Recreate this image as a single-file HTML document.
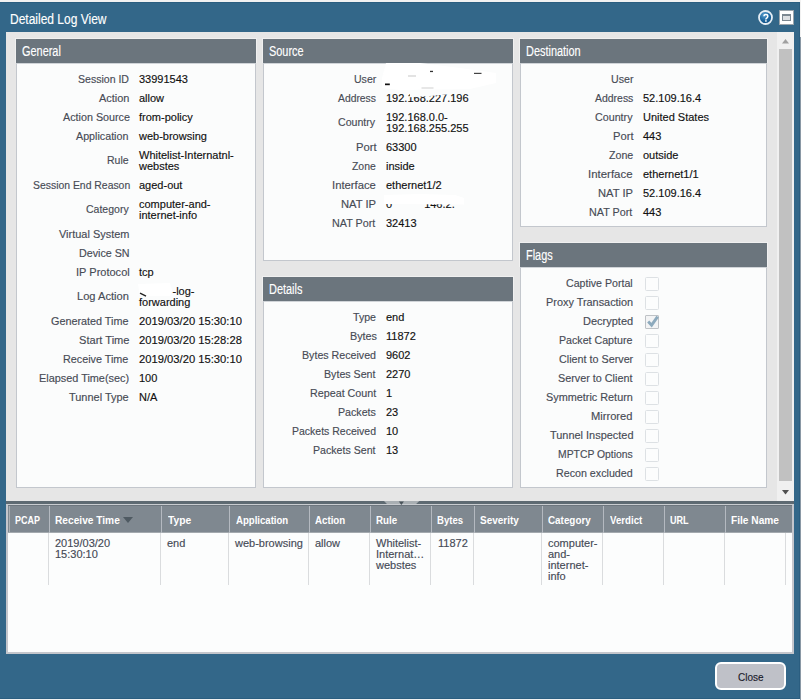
<!DOCTYPE html>
<html><head><meta charset="utf-8"><style>
html,body{margin:0;padding:0;width:801px;height:700px;overflow:hidden;background:#f1f1f1}
.t{position:absolute;white-space:nowrap;font-family:"Liberation Sans",sans-serif;-webkit-text-stroke:0.15px currentColor}
</style></head><body>
<div style="position:absolute;left:0px;top:0px;width:801px;height:700px;background:#f1f1f1"></div>
<div style="position:absolute;left:800px;top:37px;width:1px;height:663px;background:#8a98a5"></div>
<div style="position:absolute;left:0px;top:2px;width:800px;height:697px;background:#336789;box-sizing:border-box;border:1px solid #2b5e80;border-left:none"></div>
<div class="t" style="top:10px;font-size:15.5px;line-height:18px;color:#ffffff;left:10px;transform:scaleX(0.774);transform-origin:left top;-webkit-text-stroke:0.15px #fff;">Detailed Log View</div>
<svg style="position:absolute;left:758px;top:10px" width="16" height="16" viewBox="0 0 16 16"><defs><radialGradient id="hg" cx="0.4" cy="0.3" r="0.8"><stop offset="0" stop-color="#5a9fd0"/><stop offset="0.5" stop-color="#1f68a0"/><stop offset="1" stop-color="#0a4a7c"/></radialGradient></defs><circle cx="7.5" cy="7.5" r="6.5" fill="url(#hg)" stroke="#e6eef5" stroke-width="1.8"/><path d="M6,6.3 Q6,4.6 7.9,4.6 Q9.8,4.6 9.8,6.3 Q9.8,7.4 8.8,8 Q7.9,8.5 7.9,9.5" fill="none" stroke="#fff" stroke-width="1.5"/><rect x="7.1" y="10.2" width="1.6" height="1.5" fill="#fff"/></svg>
<div style="position:absolute;left:779px;top:10px;width:15px;height:15px;background:#fff;box-sizing:border-box;border:1px solid #9aa4ab"></div>
<div style="position:absolute;left:782px;top:14px;width:9px;height:7px;background:#dde0e3;box-sizing:border-box;border:2px solid #7c8891;border-width:2px 1px 1px 1px"></div>
<div style="position:absolute;left:6px;top:32px;width:788px;height:469px;background:#e6e6e6"></div>
<div style="position:absolute;left:777px;top:32px;width:17px;height:469px;background:#f0f0f0"></div>
<div style="position:absolute;left:779px;top:49px;width:13px;height:432px;background:#c1c1c1"></div>
<svg style="position:absolute;left:782px;top:39px" width="8" height="5"><polygon points="0,4.5 3.5,0 7,4.5" fill="#a0a0a0"/></svg>
<svg style="position:absolute;left:782px;top:490px" width="8" height="5"><polygon points="0,0 7,0 3.5,4.5" fill="#505050"/></svg>
<div style="position:absolute;left:15px;top:38px;width:242px;height:25px;background:#f0f0f0"></div>
<div style="position:absolute;left:16px;top:39px;width:240px;height:24px;background:#6b757d"></div>
<div style="position:absolute;left:16px;top:63px;width:240px;height:425px;background:#fbfcfc;box-sizing:border-box;border:1px solid #c3c7cd;border-top:1px solid #d0d4d8"></div>
<div class="t" style="top:43px;font-size:14px;line-height:16px;color:#ffffff;left:22px;transform:scaleX(0.78);transform-origin:left top;">General</div>
<div style="position:absolute;left:262px;top:38px;width:252px;height:25px;background:#f0f0f0"></div>
<div style="position:absolute;left:263px;top:39px;width:250px;height:24px;background:#6b757d"></div>
<div style="position:absolute;left:263px;top:63px;width:250px;height:198px;background:#fbfcfc;box-sizing:border-box;border:1px solid #c3c7cd;border-top:1px solid #d0d4d8"></div>
<div class="t" style="top:43px;font-size:14px;line-height:16px;color:#ffffff;left:269px;transform:scaleX(0.78);transform-origin:left top;">Source</div>
<div style="position:absolute;left:262px;top:276px;width:252px;height:25px;background:#f0f0f0"></div>
<div style="position:absolute;left:263px;top:277px;width:250px;height:24px;background:#6b757d"></div>
<div style="position:absolute;left:263px;top:301px;width:250px;height:187px;background:#fbfcfc;box-sizing:border-box;border:1px solid #c3c7cd;border-top:1px solid #d0d4d8"></div>
<div class="t" style="top:281px;font-size:14px;line-height:16px;color:#ffffff;left:269px;transform:scaleX(0.78);transform-origin:left top;">Details</div>
<div style="position:absolute;left:519px;top:38px;width:249px;height:25px;background:#f0f0f0"></div>
<div style="position:absolute;left:520px;top:39px;width:247px;height:24px;background:#6b757d"></div>
<div style="position:absolute;left:520px;top:63px;width:247px;height:164px;background:#fbfcfc;box-sizing:border-box;border:1px solid #c3c7cd;border-top:1px solid #d0d4d8"></div>
<div class="t" style="top:43px;font-size:14px;line-height:16px;color:#ffffff;left:526px;transform:scaleX(0.78);transform-origin:left top;">Destination</div>
<div style="position:absolute;left:519px;top:242px;width:249px;height:25px;background:#f0f0f0"></div>
<div style="position:absolute;left:520px;top:243px;width:247px;height:24px;background:#6b757d"></div>
<div style="position:absolute;left:520px;top:267px;width:247px;height:221px;background:#fbfcfc;box-sizing:border-box;border:1px solid #c3c7cd;border-top:1px solid #d0d4d8"></div>
<div class="t" style="top:247px;font-size:14px;line-height:16px;color:#ffffff;left:526px;transform:scaleX(0.78);transform-origin:left top;">Flags</div>
<div class="t" style="top:73px;font-size:11px;line-height:13px;color:#111111;left:139px;">33991543</div>
<div class="t" style="top:92px;font-size:11px;line-height:13px;color:#111111;left:139px;">allow</div>
<div class="t" style="top:111px;font-size:11px;line-height:13px;color:#111111;left:139px;">from-policy</div>
<div class="t" style="top:130px;font-size:11px;line-height:13px;color:#111111;left:139px;">web-browsing</div>
<div class="t" style="top:149px;font-size:11px;line-height:13px;color:#111111;left:139px;">Whitelist-Internatnl-</div>
<div class="t" style="top:160px;font-size:11px;line-height:13px;color:#111111;left:139px;">webstes</div>
<div class="t" style="top:179px;font-size:11px;line-height:13px;color:#111111;left:139px;">aged-out</div>
<div class="t" style="top:198px;font-size:11px;line-height:13px;color:#111111;left:139px;">computer-and-</div>
<div class="t" style="top:209px;font-size:11px;line-height:13px;color:#111111;left:139px;">internet-info</div>
<div class="t" style="top:266px;font-size:11px;line-height:13px;color:#111111;left:139px;">tcp</div>
<div class="t" style="top:285px;font-size:11px;line-height:13px;color:#111111;left:139px;"><span style="display:inline-block;width:33.5px"></span>-log-</div>
<div class="t" style="top:296px;font-size:11px;line-height:13px;color:#111111;left:139px;">forwarding</div>
<div class="t" style="top:372px;font-size:11px;line-height:13px;color:#111111;left:139px;">100</div>
<div class="t" style="top:391px;font-size:11px;line-height:13px;color:#111111;left:139px;">N/A</div>
<div class="t" style="top:92px;font-size:11px;line-height:13px;color:#111111;left:386px;">192.168.227.196</div>
<div class="t" style="top:111px;font-size:11px;line-height:13px;color:#111111;left:386px;">192.168.0.0-</div>
<div class="t" style="top:122px;font-size:11px;line-height:13px;color:#111111;left:386px;">192.168.255.255</div>
<div class="t" style="top:141px;font-size:11px;line-height:13px;color:#111111;left:386px;">63300</div>
<div class="t" style="top:160px;font-size:11px;line-height:13px;color:#111111;left:386px;">inside</div>
<div class="t" style="top:179px;font-size:11px;line-height:13px;color:#111111;left:386px;">ethernet1/2</div>
<div class="t" style="top:198px;font-size:11px;line-height:13px;color:#111111;left:386px;">0<span style="display:inline-block;width:32px"></span>146.2.</div>
<div class="t" style="top:217px;font-size:11px;line-height:13px;color:#111111;left:386px;">32413</div>
<div class="t" style="top:311px;font-size:11px;line-height:13px;color:#111111;left:386px;">end</div>
<div class="t" style="top:330px;font-size:11px;line-height:13px;color:#111111;left:386px;">11872</div>
<div class="t" style="top:349px;font-size:11px;line-height:13px;color:#111111;left:386px;">9602</div>
<div class="t" style="top:368px;font-size:11px;line-height:13px;color:#111111;left:386px;">2270</div>
<div class="t" style="top:387px;font-size:11px;line-height:13px;color:#111111;left:386px;">1</div>
<div class="t" style="top:406px;font-size:11px;line-height:13px;color:#111111;left:386px;">23</div>
<div class="t" style="top:425px;font-size:11px;line-height:13px;color:#111111;left:386px;">10</div>
<div class="t" style="top:444px;font-size:11px;line-height:13px;color:#111111;left:386px;">13</div>
<div class="t" style="top:92px;font-size:11px;line-height:13px;color:#111111;left:643px;">52.109.16.4</div>
<div class="t" style="top:111px;font-size:11px;line-height:13px;color:#111111;left:643px;">United States</div>
<div class="t" style="top:130px;font-size:11px;line-height:13px;color:#111111;left:643px;">443</div>
<div class="t" style="top:149px;font-size:11px;line-height:13px;color:#111111;left:643px;">outside</div>
<div class="t" style="top:168px;font-size:11px;line-height:13px;color:#111111;left:643px;">ethernet1/1</div>
<div class="t" style="top:187px;font-size:11px;line-height:13px;color:#111111;left:643px;">52.109.16.4</div>
<div class="t" style="top:206px;font-size:11px;line-height:13px;color:#111111;left:643px;">443</div>
<div style="position:absolute;left:645px;top:277px;width:14px;height:14px;background:#fcfdfd;box-sizing:border-box;border:1px solid #dde1e4;border-radius:1.5px"></div>
<div style="position:absolute;left:645px;top:296px;width:14px;height:14px;background:#fcfdfd;box-sizing:border-box;border:1px solid #dde1e4;border-radius:1.5px"></div>
<div style="position:absolute;left:645px;top:315px;width:14px;height:14px;background:#f3f4f5;box-sizing:border-box;border:1px solid #bec2c6;border-radius:1px"></div>
<svg style="position:absolute;left:645px;top:315px" width="14" height="14"><polyline points="3.2,6.6 6.6,10.2 12.6,1.6" fill="none" stroke="#8daabd" stroke-width="2.9"/></svg>
<div style="position:absolute;left:645px;top:334px;width:14px;height:14px;background:#fcfdfd;box-sizing:border-box;border:1px solid #dde1e4;border-radius:1.5px"></div>
<div style="position:absolute;left:645px;top:353px;width:14px;height:14px;background:#fcfdfd;box-sizing:border-box;border:1px solid #dde1e4;border-radius:1.5px"></div>
<div style="position:absolute;left:645px;top:372px;width:14px;height:14px;background:#fcfdfd;box-sizing:border-box;border:1px solid #dde1e4;border-radius:1.5px"></div>
<div style="position:absolute;left:645px;top:391px;width:14px;height:14px;background:#fcfdfd;box-sizing:border-box;border:1px solid #dde1e4;border-radius:1.5px"></div>
<div style="position:absolute;left:645px;top:410px;width:14px;height:14px;background:#fcfdfd;box-sizing:border-box;border:1px solid #dde1e4;border-radius:1.5px"></div>
<div style="position:absolute;left:645px;top:429px;width:14px;height:14px;background:#fcfdfd;box-sizing:border-box;border:1px solid #dde1e4;border-radius:1.5px"></div>
<div style="position:absolute;left:645px;top:448px;width:14px;height:14px;background:#fcfdfd;box-sizing:border-box;border:1px solid #dde1e4;border-radius:1.5px"></div>
<div style="position:absolute;left:645px;top:467px;width:14px;height:14px;background:#fcfdfd;box-sizing:border-box;border:1px solid #dde1e4;border-radius:1.5px"></div>
<svg style="position:absolute;left:376px;top:63px" width="130" height="40"><polygon points="10,0 44,0 84,5 120,10 120,20 94,26 24,27 6,25 6,15" fill="#ffffff"/><polygon points="34,27 71,27 71,31.5 54,33 34,34.3" fill="#fbfcfc"/><rect x="9" y="20.5" width="4.8" height="1.7" fill="#111"/><rect x="32" y="12.5" width="8" height="1" fill="#c8c8c8"/><rect x="54" y="7.8" width="3" height="1.3" fill="#333"/><rect x="98" y="9.8" width="7.5" height="1.2" fill="#444"/><rect x="45.5" y="24.5" width="12" height="1" fill="#d0d0d0"/></svg>
<svg style="position:absolute;left:380px;top:192px" width="90" height="24"><polygon points="4,3 40,2 75,3 84,6 84,12.6 4,11.9" fill="#ffffff"/></svg>
<svg style="position:absolute;left:136px;top:282px" width="40" height="20"><polygon points="2,2 34,1 36,8 34,14 4,14" fill="#ffffff"/><line x1="4" y1="11.2" x2="10" y2="14.2" stroke="#222" stroke-width="1.3"/></svg>
<div style="position:absolute;left:6px;top:501px;width:788px;height:3px;background:#5e6a72"></div>
<div style="position:absolute;left:6px;top:504px;width:788px;height:1px;background:#c9ccd0"></div>
<div style="position:absolute;left:6px;top:505px;width:788px;height:149px;background:#c4c6cc"></div>
<div style="position:absolute;left:8px;top:505px;width:784px;height:27px;background:#7f8890;border-top:1px solid #6d767e;box-sizing:border-box"></div>
<div style="position:absolute;left:8px;top:532px;width:784px;height:120px;background:#fcfdfd"></div>
<div style="position:absolute;left:8px;top:532px;width:784px;height:1px;background:#a3a9ae"></div>
<div style="position:absolute;left:9px;top:506px;width:1px;height:26px;background:#a9afb4"></div>
<div style="position:absolute;left:49px;top:506px;width:1px;height:27px;background:#b4b9c0"></div>
<div style="position:absolute;left:48px;top:533px;width:1px;height:52px;background:#dadcde"></div>
<div style="position:absolute;left:161px;top:506px;width:1px;height:27px;background:#b4b9c0"></div>
<div style="position:absolute;left:160px;top:533px;width:1px;height:52px;background:#dadcde"></div>
<div style="position:absolute;left:229px;top:506px;width:1px;height:27px;background:#b4b9c0"></div>
<div style="position:absolute;left:228px;top:533px;width:1px;height:52px;background:#dadcde"></div>
<div style="position:absolute;left:309px;top:506px;width:1px;height:27px;background:#b4b9c0"></div>
<div style="position:absolute;left:308px;top:533px;width:1px;height:52px;background:#dadcde"></div>
<div style="position:absolute;left:370px;top:506px;width:1px;height:27px;background:#b4b9c0"></div>
<div style="position:absolute;left:369px;top:533px;width:1px;height:52px;background:#dadcde"></div>
<div style="position:absolute;left:431px;top:506px;width:1px;height:27px;background:#b4b9c0"></div>
<div style="position:absolute;left:430px;top:533px;width:1px;height:52px;background:#dadcde"></div>
<div style="position:absolute;left:474px;top:506px;width:1px;height:27px;background:#b4b9c0"></div>
<div style="position:absolute;left:473px;top:533px;width:1px;height:52px;background:#dadcde"></div>
<div style="position:absolute;left:542px;top:506px;width:1px;height:27px;background:#b4b9c0"></div>
<div style="position:absolute;left:541px;top:533px;width:1px;height:52px;background:#dadcde"></div>
<div style="position:absolute;left:603px;top:506px;width:1px;height:27px;background:#b4b9c0"></div>
<div style="position:absolute;left:602px;top:533px;width:1px;height:52px;background:#dadcde"></div>
<div style="position:absolute;left:664px;top:506px;width:1px;height:27px;background:#b4b9c0"></div>
<div style="position:absolute;left:663px;top:533px;width:1px;height:52px;background:#dadcde"></div>
<div style="position:absolute;left:725px;top:506px;width:1px;height:27px;background:#b4b9c0"></div>
<div style="position:absolute;left:724px;top:533px;width:1px;height:52px;background:#dadcde"></div>
<div style="position:absolute;left:785px;top:533px;width:1px;height:52px;background:#dadcde"></div>
<svg style="position:absolute;left:123px;top:517px" width="11" height="7"><polygon points="0,0 10,0 5,6" fill="#4f5a62"/></svg>
<svg style="position:absolute;left:384px;top:500px" width="36" height="6"><polygon points="0,1 35.3,1 31.1,5 3.9,5" fill="#a9afb3"/><rect x="0" y="4" width="36" height="1" fill="#c9ccd0"/><polygon points="14.8,1.6 19.9,1.6 17.4,5" fill="#4a545b"/></svg>
<div class="t" style="top:537px;font-size:11px;line-height:13px;color:#454a56;left:55px;">2019/03/20</div>
<div class="t" style="top:548px;font-size:11px;line-height:13px;color:#454a56;left:55px;">15:30:10</div>
<div class="t" style="top:537px;font-size:11px;line-height:13px;color:#454a56;left:167px;">end</div>
<div class="t" style="top:537px;font-size:11px;line-height:13px;color:#454a56;left:235px;">web-browsing</div>
<div class="t" style="top:537px;font-size:11px;line-height:13px;color:#454a56;left:315px;">allow</div>
<div class="t" style="top:537px;font-size:11px;line-height:13px;color:#454a56;left:376px;">Whitelist-</div>
<div class="t" style="top:548px;font-size:11px;line-height:13px;color:#454a56;left:376px;">Internat…</div>
<div class="t" style="top:559px;font-size:11px;line-height:13px;color:#454a56;left:376px;">webstes</div>
<div class="t" style="top:537px;font-size:11px;line-height:13px;color:#454a56;left:438px;">11872</div>
<div class="t" style="top:537px;font-size:11px;line-height:13px;color:#454a56;left:548px;">computer-</div>
<div class="t" style="top:548px;font-size:11px;line-height:13px;color:#454a56;left:548px;">and-</div>
<div class="t" style="top:559px;font-size:11px;line-height:13px;color:#454a56;left:548px;">internet-</div>
<div class="t" style="top:570px;font-size:11px;line-height:13px;color:#454a56;left:548px;">info</div>
<div style="position:absolute;left:715px;top:662px;width:71px;height:28px;background:#bfc1c8;box-sizing:border-box;border:2px solid #ffffff;border-radius:6px"></div>
<div class="t" style="top:73px;left:78.20px;font-size:11px;line-height:13px;color:#474b55;transform:scaleX(0.9585);transform-origin:left top;">Session ID</div>
<div class="t" style="top:92px;left:99.10px;font-size:11px;line-height:13px;color:#474b55;transform:scaleX(0.9967);transform-origin:left top;">Action</div>
<div class="t" style="top:111px;left:62.50px;font-size:11px;line-height:13px;color:#474b55;transform:scaleX(0.9779);transform-origin:left top;">Action Source</div>
<div class="t" style="top:130px;left:76.40px;font-size:11px;line-height:13px;color:#474b55;transform:scaleX(0.9741);transform-origin:left top;">Application</div>
<div class="t" style="top:154px;left:107.05px;font-size:11px;line-height:13px;color:#474b55;transform:scaleX(0.9545);transform-origin:left top;">Rule</div>
<div class="t" style="top:179px;left:32.50px;font-size:11px;line-height:13px;color:#474b55;transform:scaleX(0.9461);transform-origin:left top;">Session End Reason</div>
<div class="t" style="top:203px;left:86.00px;font-size:11px;line-height:13px;color:#474b55;transform:scaleX(0.9556);transform-origin:left top;">Category</div>
<div class="t" style="top:228px;left:59.30px;font-size:11px;line-height:13px;color:#474b55;transform:scaleX(0.9957);transform-origin:left top;">Virtual System</div>
<div class="t" style="top:247px;left:79.33px;font-size:11px;line-height:13px;color:#474b55;transform:scaleX(0.9740);transform-origin:left top;">Device SN</div>
<div class="t" style="top:266px;left:75.90px;font-size:11px;line-height:13px;color:#474b55;transform:scaleX(1.0019);transform-origin:left top;">IP Protocol</div>
<div class="t" style="top:290px;left:77.49px;font-size:11px;line-height:13px;color:#474b55;transform:scaleX(1.0100);transform-origin:left top;">Log Action</div>
<div class="t" style="top:315px;left:51.40px;font-size:11px;line-height:13px;color:#474b55;transform:scaleX(0.9823);transform-origin:left top;">Generated Time</div>
<div class="t" style="top:315px;left:139.00px;font-size:11px;line-height:13px;color:#111111;transform:scaleX(1.0198);transform-origin:left top;">2019/03/20 15:30:10</div>
<div class="t" style="top:334px;left:78.60px;font-size:11px;line-height:13px;color:#474b55;transform:scaleX(1.0080);transform-origin:left top;">Start Time</div>
<div class="t" style="top:334px;left:139.00px;font-size:11px;line-height:13px;color:#111111;transform:scaleX(1.0198);transform-origin:left top;">2019/03/20 15:28:28</div>
<div class="t" style="top:353px;left:63.32px;font-size:11px;line-height:13px;color:#474b55;transform:scaleX(0.9803);transform-origin:left top;">Receive Time</div>
<div class="t" style="top:353px;left:139.00px;font-size:11px;line-height:13px;color:#111111;transform:scaleX(1.0198);transform-origin:left top;">2019/03/20 15:30:10</div>
<div class="t" style="top:372px;left:39.01px;font-size:11px;line-height:13px;color:#474b55;transform:scaleX(0.9889);transform-origin:left top;">Elapsed Time(sec)</div>
<div class="t" style="top:391px;left:69.30px;font-size:11px;line-height:13px;color:#474b55;transform:scaleX(0.9950);transform-origin:left top;">Tunnel Type</div>
<div class="t" style="top:73px;left:353.94px;font-size:11px;line-height:13px;color:#474b55;transform:scaleX(0.9591);transform-origin:left top;">User</div>
<div class="t" style="top:92px;left:338.40px;font-size:11px;line-height:13px;color:#474b55;transform:scaleX(0.9400);transform-origin:left top;">Address</div>
<div class="t" style="top:116px;left:338.40px;font-size:11px;line-height:13px;color:#474b55;transform:scaleX(0.9641);transform-origin:left top;">Country</div>
<div class="t" style="top:141px;left:355.58px;font-size:11px;line-height:13px;color:#474b55;transform:scaleX(1.0211);transform-origin:left top;">Port</div>
<div class="t" style="top:160px;left:352.30px;font-size:11px;line-height:13px;color:#474b55;transform:scaleX(0.9480);transform-origin:left top;">Zone</div>
<div class="t" style="top:179px;left:331.98px;font-size:11px;line-height:13px;color:#474b55;transform:scaleX(1.0238);transform-origin:left top;">Interface</div>
<div class="t" style="top:198px;left:341.38px;font-size:11px;line-height:13px;color:#474b55;transform:scaleX(1.0182);transform-origin:left top;">NAT IP</div>
<div class="t" style="top:217px;left:332.02px;font-size:11px;line-height:13px;color:#474b55;transform:scaleX(0.9773);transform-origin:left top;">NAT Port</div>
<div class="t" style="top:311px;left:352.90px;font-size:11px;line-height:13px;color:#474b55;transform:scaleX(0.9625);transform-origin:left top;">Type</div>
<div class="t" style="top:330px;left:349.52px;font-size:11px;line-height:13px;color:#474b55;transform:scaleX(0.9808);transform-origin:left top;">Bytes</div>
<div class="t" style="top:349px;left:302.43px;font-size:11px;line-height:13px;color:#474b55;transform:scaleX(0.9680);transform-origin:left top;">Bytes Received</div>
<div class="t" style="top:368px;left:323.73px;font-size:11px;line-height:13px;color:#474b55;transform:scaleX(0.9679);transform-origin:left top;">Bytes Sent</div>
<div class="t" style="top:387px;left:309.62px;font-size:11px;line-height:13px;color:#474b55;transform:scaleX(0.9761);transform-origin:left top;">Repeat Count</div>
<div class="t" style="top:406px;left:338.23px;font-size:11px;line-height:13px;color:#474b55;transform:scaleX(0.9684);transform-origin:left top;">Packets</div>
<div class="t" style="top:425px;left:292.05px;font-size:11px;line-height:13px;color:#474b55;transform:scaleX(0.9540);transform-origin:left top;">Packets Received</div>
<div class="t" style="top:444px;left:313.34px;font-size:11px;line-height:13px;color:#474b55;transform:scaleX(0.9641);transform-origin:left top;">Packets Sent</div>
<div class="t" style="top:73px;left:610.73px;font-size:11px;line-height:13px;color:#474b55;transform:scaleX(0.9682);transform-origin:left top;">User</div>
<div class="t" style="top:92px;left:595.00px;font-size:11px;line-height:13px;color:#474b55;transform:scaleX(0.9500);transform-origin:left top;">Address</div>
<div class="t" style="top:111px;left:595.00px;font-size:11px;line-height:13px;color:#474b55;transform:scaleX(0.9744);transform-origin:left top;">Country</div>
<div class="t" style="top:130px;left:612.68px;font-size:11px;line-height:13px;color:#474b55;transform:scaleX(1.0158);transform-origin:left top;">Port</div>
<div class="t" style="top:149px;left:608.80px;font-size:11px;line-height:13px;color:#474b55;transform:scaleX(0.9680);transform-origin:left top;">Zone</div>
<div class="t" style="top:168px;left:588.26px;font-size:11px;line-height:13px;color:#474b55;transform:scaleX(1.0405);transform-origin:left top;">Interface</div>
<div class="t" style="top:187px;left:598.48px;font-size:11px;line-height:13px;color:#474b55;transform:scaleX(1.0152);transform-origin:left top;">NAT IP</div>
<div class="t" style="top:206px;left:589.02px;font-size:11px;line-height:13px;color:#474b55;transform:scaleX(0.9773);transform-origin:left top;">NAT Port</div>
<div class="t" style="top:277px;left:566.40px;font-size:11px;line-height:13px;color:#474b55;transform:scaleX(0.9652);transform-origin:left top;">Captive Portal</div>
<div class="t" style="top:296px;left:545.91px;font-size:11px;line-height:13px;color:#474b55;transform:scaleX(0.9897);transform-origin:left top;">Proxy Transaction</div>
<div class="t" style="top:315px;left:583.00px;font-size:11px;line-height:13px;color:#474b55;transform:scaleX(1.0000);transform-origin:left top;">Decrypted</div>
<div class="t" style="top:334px;left:559.43px;font-size:11px;line-height:13px;color:#474b55;transform:scaleX(0.9680);transform-origin:left top;">Packet Capture</div>
<div class="t" style="top:353px;left:558.60px;font-size:11px;line-height:13px;color:#474b55;transform:scaleX(0.9789);transform-origin:left top;">Client to Server</div>
<div class="t" style="top:372px;left:558.40px;font-size:11px;line-height:13px;color:#474b55;transform:scaleX(0.9816);transform-origin:left top;">Server to Client</div>
<div class="t" style="top:391px;left:546.20px;font-size:11px;line-height:13px;color:#474b55;transform:scaleX(0.9864);transform-origin:left top;">Symmetric Return</div>
<div class="t" style="top:410px;left:591.49px;font-size:11px;line-height:13px;color:#474b55;transform:scaleX(1.0125);transform-origin:left top;">Mirrored</div>
<div class="t" style="top:429px;left:549.50px;font-size:11px;line-height:13px;color:#474b55;transform:scaleX(0.9940);transform-origin:left top;">Tunnel Inspected</div>
<div class="t" style="top:448px;left:558.46px;font-size:11px;line-height:13px;color:#474b55;transform:scaleX(0.9436);transform-origin:left top;">MPTCP Options</div>
<div class="t" style="top:467px;left:556.23px;font-size:11px;line-height:13px;color:#474b55;transform:scaleX(0.9718);transform-origin:left top;">Recon excluded</div>
<div class="t" style="top:514px;left:15.00px;font-size:11px;line-height:13px;color:#ffffff;transform:scaleX(0.8161);transform-origin:left top;font-weight:bold;-webkit-text-stroke:0;">PCAP</div>
<div class="t" style="top:514px;left:55.20px;font-size:11px;line-height:13px;color:#ffffff;transform:scaleX(0.9243);transform-origin:left top;font-weight:bold;-webkit-text-stroke:0;">Receive Time</div>
<div class="t" style="top:514px;left:167.60px;font-size:11px;line-height:13px;color:#ffffff;transform:scaleX(0.9360);transform-origin:left top;font-weight:bold;-webkit-text-stroke:0;">Type</div>
<div class="t" style="top:514px;left:235.50px;font-size:11px;line-height:13px;color:#ffffff;transform:scaleX(0.8717);transform-origin:left top;font-weight:bold;-webkit-text-stroke:0;">Application</div>
<div class="t" style="top:514px;left:315.00px;font-size:11px;line-height:13px;color:#ffffff;transform:scaleX(0.8824);transform-origin:left top;font-weight:bold;-webkit-text-stroke:0;">Action</div>
<div class="t" style="top:514px;left:376.00px;font-size:11px;line-height:13px;color:#ffffff;transform:scaleX(0.8875);transform-origin:left top;font-weight:bold;-webkit-text-stroke:0;">Rule</div>
<div class="t" style="top:514px;left:437.40px;font-size:11px;line-height:13px;color:#ffffff;transform:scaleX(0.8700);transform-origin:left top;font-weight:bold;-webkit-text-stroke:0;">Bytes</div>
<div class="t" style="top:514px;left:480.00px;font-size:11px;line-height:13px;color:#ffffff;transform:scaleX(0.9070);transform-origin:left top;font-weight:bold;-webkit-text-stroke:0;">Severity</div>
<div class="t" style="top:514px;left:548.00px;font-size:11px;line-height:13px;color:#ffffff;transform:scaleX(0.8958);transform-origin:left top;font-weight:bold;-webkit-text-stroke:0;">Category</div>
<div class="t" style="top:514px;left:610.00px;font-size:11px;line-height:13px;color:#ffffff;transform:scaleX(0.8784);transform-origin:left top;font-weight:bold;-webkit-text-stroke:0;">Verdict</div>
<div class="t" style="top:514px;left:670.00px;font-size:11px;line-height:13px;color:#ffffff;transform:scaleX(0.8261);transform-origin:left top;font-weight:bold;-webkit-text-stroke:0;">URL</div>
<div class="t" style="top:514px;left:731.00px;font-size:11px;line-height:13px;color:#ffffff;transform:scaleX(0.9231);transform-origin:left top;font-weight:bold;-webkit-text-stroke:0;">File Name</div>
<div class="t" style="top:671px;left:737.60px;font-size:11px;line-height:13px;color:#1a1a2a;transform:scaleX(0.9071);transform-origin:left top;">Close</div>
</body></html>
